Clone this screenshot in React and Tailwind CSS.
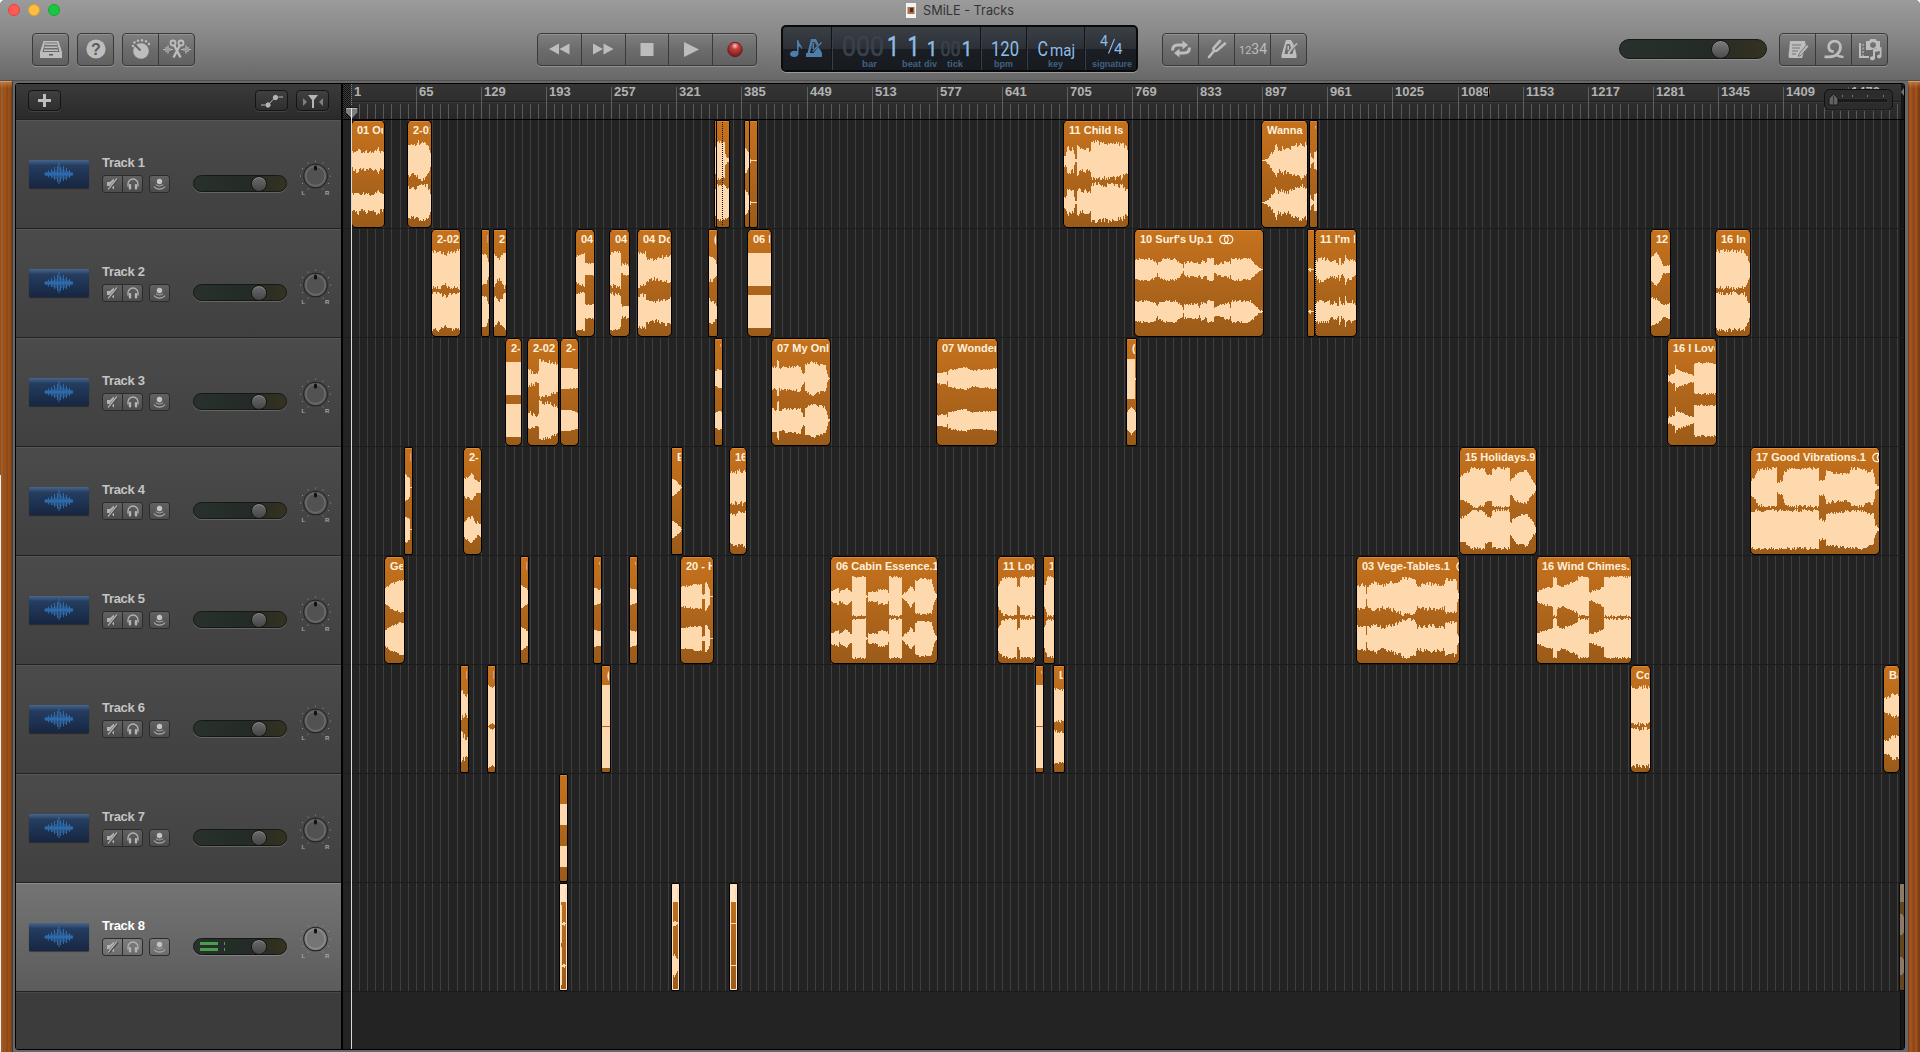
import React from "react";

const SANS = "font-['Liberation_Sans',Arial,sans-serif]";

/* ---------- region data: [start, end, label, envelope, jitter, options] ---------- */
const LANES = [
  [
    [351, 385, "01 Our Prayer", "0 10 5 13 9 10 14 12 18 10 23 12 26 14 28 10 32 11", 4],
    [407, 432, "2-01", "0 17 8 17 10 20.5 18 20.5 21 15 23 8", 5],
    [714, 718, "", "0 14 2 14", 1],
    [716, 730, "  In", "0 20 7 19 8 7 10 3 12 3", 3, { ch2: "0 19 7 19 9 17 12 14", dots: 6 }],
    [744, 750, "", "0 14 2 11 4 7", 2],
    [749, 758, " -", "0 2 1 0.5 8 0.5", 0],
    [1063, 1129, "11 Child Is", "0 8 2 9 3 15 9 13 11 2 12 2 13 16 18 12 20 15 26 12 27 20.5 40 20.5 50 20.5 58 19 64 13", 5],
    [1261, 1308, "Wanna", "0 0.5 4 2 8 8 12 14 14 18 16 13 20 15 25 13 30 16 38 20 45 18", 5],
    [1309, 1318, "'", "0 8 1 4 3 2 4 9 7 10", 1],
  ],
  [
    [431, 461, "2-02", "0 20.5 8 20 13 17 18 20 27 20.5", 4],
    [481, 490, "I", "0 16 4 15 6 8 7 5", 1],
    [493, 507, "2-", "0 18 4 12 8 15 10 20 12 17", 4],
    [575, 595, "04", "0 14 8.9 18 9 7 18 7", 2, { ch2: "0 19.5 8.9 19.5 9 8 18 8" }],
    [609, 630, "04", "0 18 10.9 20 11 7 20 7", 4, { ch2: "0 19.5 10.9 19.5 11 8 20 8" }],
    [637, 672, "04 Do You", "0 18.5 7.9 18.5 8 13 18 11 22 14 34 15", 4],
    [708, 718, "(", "0 14 4 13 7 9", 4],
    [747, 772, "06 I", "0 17 23 17", 1],
    [1134, 1264, "10 Surf's Up.1", "0 11 5 12 14 12 20 10 22 6 22.9 4 23 9 30 12 40 12 45 8 47 6 48 2 49 8 62 9 64 6 66 10 71 8 72 12 78 12 79 6 88 8 94 10 95 6 96 12 114 12 118 9 124 2 128 0.5", 2.5, { stereo: true }],
    [1307, 1315, "", "0 0.5 2 2 3 0.5 5 0.5", 0],
    [1314, 1357, "11 I'm In", "0 10 5 14 10 12 14 12 16 8 20 11 23 8 24 15 26 8 29 9 30 16 33 10 36 12 40 9", 4, { dots: 1 }],
    [1650, 1671, "12", "0 13 5 18 8 13 12 5 19 5", 2, { ch2: "0 15 6 13 12 7 19 9" }],
    [1715, 1751, "16 In", "0 20.5 28 20.5 31 14 34 6", 4],
  ],
  [
    [505, 522, "2-", "0 17 15 17", 1],
    [527, 559, "2-02", "0 10 9 6 9.5 10 10.900 6 11 20.5 20 19 30 15", 4],
    [560, 579, "2-", "0 11 17 10", 0.5, { ch2: "0 11 8 11 17 8" }],
    [714, 723, "'", "0 8 3 10 7 9", 1],
    [771, 831, "07 My Only", "0 13 4 12 5 20 6 20 7 12 28 14 30 8 31 6 32 6 33 15 40 18 53 14 56 2 58 0.5", 3],
    [936, 998, "07 Wonderful", "0 6 9 7 10 4 11 9 28 12 35 9 37 9 60 11", 1.5],
    [1126, 1137, "(", "0 20 7.9 20 8 1 9 1", 0, { ch2: "0 9 4 14 8 9 9 1" }],
    [1667, 1717, "16 I Love To", "0 4 6 6 7 14 8 10 14 8 25.9 4 26 16.5 48 16.5", 2],
  ],
  [
    [404, 413, "I", "0 14 4 11 4.9 8 5 0.5 7 0.5", 2],
    [463, 482, "2-", "0 10 8 15 11 9 17 7", 3],
    [671, 683, "E", "0 9 4 7 9 1", 1],
    [729, 747, "16", "0 18 15 19", 5],
    [1459, 1537, "15 Holidays.9", "0 13 8 17 11 20.5 24.9 20.5 25 16 31 14 32 20 34 20.5 49.9 20.5 50 8 56 15 66 18 70 12 76 3", 3],
    [1750, 1880, "17 Good Vibrations.1", "0 9 4 14 7 19 12 20 14 20.5 25 20.5 25.9 7 31 8 33 17 38 20.5 67.9 20.5 68 9 73 9 75 18 80 16 98 15 100 20.5 110 20.5 118 16 121 19 123 12 124 5 128 0.5", 3, { ch2: "0 20.5 67.9 20.5 68 12 74 10 75 18 100 20 110 20.5 122 17 124 6 128 0.5", stereo: true }],
  ],
  [
    [384, 405, "Gee", "0 9 5 13 10 15 14 16.5 19 17", 2],
    [520, 529, "I", "0 12 3 10 7 7", 1],
    [593, 602, "'", "0 9 7 7", 1],
    [629, 638, "'", "0 9 7 7", 1],
    [680, 714, "20 - Hidden", "0 11 14 13 20 13 20.9 12 21 3 23 3 23.5 15 25 15 28 9 28.5 1 32 0.5", 2],
    [830, 938, "06 Cabin Essence.1", "0 6 7 9 8 5 10 7 15 10 20 5 20.9 5 21 20.5 34.9 20.5 35 2 36 1 37 6 46 6 47 9 56 8 57 5 58 20.5 70.9 20.5 71 2 73 5 77 8 79 12 83 7 84 17 90 19 100 18 103 6 106 0.5", 2],
    [997, 1036, "11 Look", "0 13 4 19 9 20.5 18.9 20.5 19 10 21 12 22 20.5 37 20.5", 2.5],
    [1043, 1055, "1", "0 12 3 20.5 10 20.5", 3],
    [1356, 1460, "03 Vege-Tables.1", "0 14 8 13 9 5 10 13 18 16 25 13 40 17 46 20.5 57 20.5 60 13 75 15 87 13 88 19 99 18 100 8 102 0.5", 4, { stereo: true }],
    [1536, 1632, "16 Wind Chimes.1", "0 6 6 9 15.9 11 16 20 19 20.5 20 13 25 11 40 17 41 20.5 51.9 20.5 52 5 60 8 66.9 11 67 20.5 94 20.5", 2],
  ],
  [
    [460, 469, "I", "0 17 3 14 5 12 7 14", 7],
    [487, 496, "I", "0 20.5 4 18 7 20.5", 0.5],
    [601, 611, "(", "0 20.5 9 20.5", 0.5],
    [1035, 1044, "'", "0 20.5 9 20.5", 0],
    [1053, 1065, "L", "0 18 10 17", 3],
    [1630, 1651, "Cor", "0 20.5 20 20.5", 4],
    [1883, 1900, "Bar", "0 9 6 10 8 14 15 11", 3],
  ],
  [[559, 568, ":", "0 10.5 8 10.5", 0.3]],
  [
    [559, 568, "|", "0 19 1 19 2 1 4 2 5 0.5 7 0.5", 0, { selected: true }],
    [671, 680, "|", "0 2 3 3 4 2 7 1", 1, { selected: true, ch2: "0 8 2 12 4 8 7 3" }],
    [729, 738, "|", "0 2 1 0.5 7 0.5", 0, { selected: true }],
  ],
];

const noise = (n) => {
  const s = Math.sin(n * 127.1 + 11.7) * 43758.5453;
  return s - Math.floor(s);
};

function envelopeAt(points, x) {
  for (let i = 0; i + 3 < points.length; i += 2) {
    const [x0, a0, x1, a1] = points.slice(i, i + 4);
    if (x >= x0 && x < x1) return a0 + ((a1 - a0) * (x - x0)) / (x1 - x0);
  }
  return points[points.length - 1];
}

function wavePath(env, jitter, width, seed, center) {
  const pts = env.split(" ").map(Number);
  let d = "";
  for (let x = 0; x < width; x++) {
    const amp = envelopeAt(pts, x);
    const j = Math.min(jitter, amp * 0.5);
    const up = Math.max(0.5, amp - j * noise(seed + x * 2.3));
    const down = Math.max(0.5, amp - j * noise(seed + x * 3.7 + 9));
    const top = Math.round(center - up);
    const bottom = Math.round(center + down);
    d += `M${x} ${top}h1v${bottom - top}h-1z`;
  }
  return d;
}

function Region({ data }) {
  const [start, end, label, env, jitter, opt = {}] = data;
  const inner = end - start - 2;
  const narrow = inner < 13;
  return (
    <div
      className={`absolute top-0 h-[108px] overflow-hidden border border-black bg-gradient-to-b from-[#c6721d] to-[#9b5b19] ${narrow ? "rounded-[2px]" : "rounded-[5px]"}`}
      style={{ left: start - 343, width: end - start }}
    >
      <svg className="absolute left-0 top-0" width={inner} height="106" shapeRendering="crispEdges">
        <rect width={inner} height="1" fill="#de8a35" />
        <path fill="#ffd9ae" d={wavePath(env, jitter, inner, start, 39.5)} />
        <path fill="#ffd9ae" d={wavePath(opt.ch2 || env, jitter, inner, start + 0.7, 81.5)} />
        {opt.dots && <path d={`M${opt.dots - 0.5} 1V105`} stroke="#111" strokeDasharray="1 1" />}
        {opt.selected && <path fill="#ffe3c2" fillRule="evenodd" d={`M0 0H${inner}V106H0zM1 18V105H${inner - 1}V18z`} />}
      </svg>
      <div className={`relative flex h-[18px] items-center gap-[7px] overflow-hidden whitespace-pre pl-[5px] pt-px text-[11px] font-bold leading-none ${inner > 100 ? "" : "mr-px"} ${opt.selected ? "text-[#bfa98d]" : "text-[#fff1df]"}`}>
        <span>{label}</span>
        {opt.stereo && (
          <svg className="-ml-px shrink-0" width="15" height="11" fill="none" stroke="#fff1df" strokeWidth="1.2">
            <circle cx="5" cy="5.5" r="4.2" />
            <circle cx="9.6" cy="5.5" r="4.2" />
          </svg>
        )}
      </div>
    </div>
  );
}

/* ---------- toolbar ---------- */
function ButtonGroup({ children, className = "" }) {
  return (
    <div className={`flex h-[33px] divide-x divide-[#3a3a3a] overflow-hidden rounded-[4px] border border-[#3a3a3a] bg-gradient-to-b from-[#7f7f7f] via-[#6c6c6c] via-50% to-[#616161] shadow-[0_1px_0_rgba(255,255,255,0.22)] ${className}`}>
      {children}
    </div>
  );
}
function Btn({ children }) {
  return (
    <button className="flex h-full flex-1 items-center justify-center shadow-[inset_0_1px_0_rgba(255,255,255,0.15)]">
      <svg width="32" height="30" viewBox="0 0 32 30" fill="#bdbdbd" stroke="none">{children}</svg>
    </button>
  );
}

const Metronome = () => (
  <g>
    <path fillRule="evenodd" d="M13 6h5l3 5-1.5 2.5L16.500 20h3l1-4 1.500-2 1.500 7v3H8.500v-3L12 9zM13.500 10l-2 10h3l3.500-6-1-4zM14.500 12h1.500v4h-1.500z" />
    <path d="M15 19L24 9.500" stroke="#bdbdbd" strokeWidth="1.500" />
  </g>
);

function VolumeSlider({ className, knob, knobClass, meter }) {
  return (
    <div className={`relative flex items-center rounded-full border border-[#161816] bg-gradient-to-r from-[#28312c] via-[#242b27] via-60% to-[#35321f] shadow-[0_1px_0_rgba(255,255,255,0.18)] ${className}`}>
      {meter && (
        <div className="ml-[6px] flex gap-[6px]">
          <div className="flex flex-col gap-[3px]">
            <div className="h-[3px] w-[18px] bg-[#48a04a]" />
            <div className="h-[3px] w-[18px] bg-[#48a04a]" />
          </div>
          <div className="flex flex-col gap-[3px]">
            <div className="h-[3px] w-px bg-[#48a04a]" />
            <div className="h-[3px] w-px bg-[#48a04a]" />
          </div>
        </div>
      )}
      <div className={`absolute rounded-full border border-[#151515] bg-gradient-to-b shadow-[inset_0_1px_0_#8a8a8a] ${knobClass}`} style={{ left: knob }} />
    </div>
  );
}

function Lcd() {
  const t = (x, y, size, w, s, fill = "#8dbde6") => (
    <text x={x} y={y} fontSize={size} textLength={w} lengthAdjust="spacingAndGlyphs" fill={fill}>{s}</text>
  );
  return (
    <div className="h-[47px] w-[357px] rounded-[5px] border-2 border-[#0a0a0c] bg-gradient-to-b from-[#3b3f46] to-[#1e2128] shadow-[0_1px_0_rgba(255,255,255,0.3)]">
      <svg width="353" height="43" viewBox="783 27 353 43" fontFamily="Roboto, sans-serif">
        <rect x="783" y="49" width="353" height="21" fill="#16181e" opacity=".75" />
        {[831, 980, 1026, 1084].map((x) => (
          <g key={x}><rect x={x} y="27" width="1" height="43" fill="#121419" /><rect x={x + 1} y="27" width="1" height="43" fill="#3a3e45" /></g>
        ))}
        <g fill="#4e7ea9">
          <path d="M797 40h1.500c0 4 4 4.500 3.500 9.500-.8-2-2-2.700-3.500-3v7c0 2-1.800 3.500-4.200 3.500-2.500 0-4.300-1.300-4.300-3s2-3.300 4.500-3.300c1 0 1.800.2 2.500.6z" />
          <path fillRule="evenodd" d="M811 39h5l2.500 5-1.500 2-2.500-4h-2L810 53h3.500l4.500-6 2.500 3 1.500 3v4h-16v-4h1.500zM812.500 43h1.500v6h-1.500z" />
          <path d="M812.500 51.500l9-9" stroke="#4e7ea9" strokeWidth="1.500" />
        </g>
        <g stroke="#39414b" strokeWidth=".7">
          {t(842, 55.500, 28, 42, "000", "#39414b")}
          {t(940.500, 55.500, 20, 20, "00", "#39414b")}
        </g>
        <g stroke="#8dbde6" strokeWidth=".5">
          {t(887, 55.500, 28, 12, "1")}
          {t(907.500, 55.500, 28, 12, "1")}
          {t(927, 55.500, 20, 10, "1")}
          {t(962, 55.500, 20, 10, "1")}
        </g>
        {t(991, 55.500, 20, 28, "120")}
        {t(1037.500, 55.500, 20, 10.500, "C")}
        {t(1050, 55.500, 16, 25, "maj")}
        {t(1100, 46, 15, 8, "4")}
        <path d="M1108.500 53.500L1114.500 39" stroke="#8dbde6" strokeWidth="1.100" />
        {t(1114, 54, 15, 8.500, "4")}
        <g fontFamily="Liberation Sans, sans-serif" fontSize="9" fontWeight="bold">
          {[[862, 15, "bar"], [902, 19, "beat"], [924, 13, "div"], [947, 16, "tick"], [994, 19, "bpm"], [1048, 15, "key"], [1092, 40, "signature"]].map(([x, w, s]) => (
            <text key={s} x={x} y="66.500" textLength={w} lengthAdjust="spacingAndGlyphs" fill="#3f6283">{s}</text>
          ))}
        </g>
      </svg>
    </div>
  );
}

function Toolbar() {
  return (
    <header className="h-[81px] shrink-0 border-b border-[#505050] bg-gradient-to-b from-[#9b9b9b] via-[#858585] via-50% to-[#686868]">
      <div className="flex h-[20px] items-center">
        <div className="flex w-[906px] gap-2 pl-2">
          <div className="size-[12px] rounded-full border border-[#e0443e] bg-[#ff5a56]" />
          <div className="size-[12px] rounded-full border border-[#dfa023] bg-[#ffbe3f]" />
          <div className="size-[12px] rounded-full border border-[#12ac28] bg-[#1bc645]" />
        </div>
        <svg width="10" height="15" className="mr-[7px]"><rect width="10" height="15" fill="#f4f4f4" /><rect x="1.500" y="4" width="7" height="7" fill="#a96f45" /><rect x="4" y="5" width="3" height="4" fill="#4c2f20" /></svg>
        <svg width="96" height="16"><text x="0" y="13" fontFamily="Inter, sans-serif" fontSize="13" textLength="91" lengthAdjust="spacingAndGlyphs" fill="#333">SMiLE - Tracks</text></svg>
      </div>
      <div className="mt-[5px] flex h-[47px] items-center pl-8 pt-px">
        <ButtonGroup className="w-[37px]">
          <Btn>
            <path fillRule="evenodd" d="M8.500 7h15l3.500 11v6H5v-6zM10 8.500l-2.500 9.500h17L22 8.500z" />
            <path d="M10 9.500h12v1.500H10zM9.500 12.500h13V14h-13zM9 15.500h14V17H9z" />
            <rect x="14" y="20" width="4" height="1.500" fill="#5a5a5a" />
          </Btn>
        </ButtonGroup>
        <ButtonGroup className="ml-2 w-[37px]">
          <Btn>
            <circle cx="16" cy="15" r="9.600" />
            <text x="16" y="20.500" textAnchor="middle" fontFamily="Liberation Sans, sans-serif" fontWeight="bold" fontSize="16" fill="#5c5c5c">?</text>
          </Btn>
        </ButtonGroup>
        <ButtonGroup className="ml-2 w-[73px]">
          <Btn>
            <circle cx="16" cy="17" r="7.800" />
            <path d="M10 11l5.500 5.500" stroke="#666" strokeWidth="1.800" />
            {[[8, 12], [9.500, 8.500], [13, 6.800], [17, 6.200], [21, 7.200], [24, 10]].map(([x, y]) => <circle key={x} cx={x} cy={y} r="1.200" />)}
          </Btn>
          <Btn>
            <g fill="none" stroke="#bdbdbd">
              <circle cx="12" cy="9" r="2.500" strokeWidth="1.800" />
              <circle cx="20" cy="9" r="2.500" strokeWidth="1.800" />
              <path d="M13 11l6.500 12.500M19 11l-6.500 12.500" strokeWidth="2.400" />
              <path d="M2 15.500h2M5 13v5M7 11.500v8M9 14v3M10 15.500h2M20 15.500h2M23 14v3M25 11.500v8M27 13v5M28 15.500h2" strokeWidth="1.200" />
            </g>
          </Btn>
        </ButtonGroup>

        <ButtonGroup className="ml-[342px] w-[220px]">
          <Btn><path d="M16 9.500v11l-10-5.500zM26.500 9.500v11l-10-5.500z" /></Btn>
          <Btn><path d="M6 9.500v11l10-5.500zM16.500 9.500v11l10-5.500z" /></Btn>
          <Btn><rect x="9.500" y="9" width="13" height="13" /></Btn>
          <Btn><path d="M9 8v15l15-7.500z" /></Btn>
          <Btn>
            <defs><radialGradient id="rec" cx=".5" cy=".25" r=".8"><stop offset="0" stopColor="#ffc9c4" /><stop offset=".3" stopColor="#c4423e" /><stop offset="1" stopColor="#6d1413" /></radialGradient></defs>
            <circle cx="16" cy="15.500" r="7.200" fill="url(#rec)" stroke="#5a1a1a" strokeWidth=".8" />
          </Btn>
        </ButtonGroup>

        <div className="-mt-px ml-6"><Lcd /></div>

        <ButtonGroup className="ml-6 w-[145px]">
          <Btn>
            <path fill="none" stroke="#bdbdbd" strokeWidth="3" d="M7.500 16.500c0-4 2.500-5.500 5.500-5.500h5M24.500 13.500c0 4-2.500 5.500-5.500 5.500h-5" />
            <path d="M17.500 6.500l5.500 4.500-5.500 4.500zM14.500 14.500L9 19l5.500 4.500z" />
          </Btn>
          <Btn><path fill="none" stroke="#bdbdbd" strokeWidth="2.600" strokeLinecap="round" d="M8 23l5-6M19 7l-6 6.500c-1.500 2 .8 4.500 3 3L24 9.500" /></Btn>
          <Btn><text x="2" y="20" textLength="28" lengthAdjust="spacingAndGlyphs" fontFamily="Roboto, sans-serif"><tspan fontSize="11">12</tspan><tspan fontSize="14">34</tspan></text></Btn>
          <Btn><Metronome /></Btn>
        </ButtonGroup>

        <VolumeSlider className="ml-[312px] h-[20px] w-[148px]" knob={91} knobClass="size-[19px] from-[#7c7c7c] to-[#4b4b4b]" />

        <ButtonGroup className="ml-3 w-[109px]">
          <Btn>
            <path d="M8 7h15l1 5-4 12H8c-1 0-1.500-1-1.500-2z" />
            <path d="M10 11h9M10 14h8M10 17h6M10 20h4" stroke="#777" strokeWidth="1.200" />
            <path d="M17 20l8-9.500 2 1.800-8 9.200-2.600.8z" stroke="#666" strokeWidth=".8" />
          </Btn>
          <Btn>
            <path fill="none" stroke="#bdbdbd" strokeWidth="2.800" d="M6.500 22.800h5c7 0 11-4.800 11-9.800 0-3.500-2.700-5.800-6-5.800s-5.800 2.500-5.800 5.500c0 2.800 1.800 4.800 5 4.800" />
            <path fill="none" stroke="#bdbdbd" strokeWidth="2.400" d="M18 20c1.500 2 4 3 7.500 2.800" />
          </Btn>
          <Btn>
            <path fillRule="evenodd" d="M12 7h3l1.500-2h5L23 7h3v7h-4l-5 2h-5zM19 8a3 3 0 1 0 .01 0z" />
            <path d="M5 9h2v13h8v2H5z" /><path d="M9 10v12" stroke="#bdbdbd" strokeWidth="1.200" strokeDasharray="2 1.500" />
            <path d="M19 15l8.500-2v9c0 3-4.500 3-4.500.5 0-1.500 1.500-2 2.800-2V17L21 18v6c0 3-5 3-5 .5 0-1.800 1.500-2.300 3-2.300z" />
          </Btn>
        </ButtonGroup>
      </div>
    </header>
  );
}

/* ---------- track headers ---------- */
const SmallBtn = "flex h-[18px] items-center justify-center border border-[#2b2b2b] bg-gradient-to-b from-white/15 to-white/5";

function TrackHeader({ n, selected }) {
  return (
    <div className={`flex h-[109px] shrink-0 border-t border-[#222] bg-gradient-to-b ${selected ? "from-[#747474] to-[#5c5c5c] shadow-[inset_0_1px_0_#8b8b8b]" : "from-[#4b4b4b] to-[#404040] shadow-[inset_0_1px_0_#565656]"}`}>
      <div className="ml-[13px] mt-[40px] flex h-[28px] w-[60px] items-center justify-center rounded-[1px] bg-gradient-to-b from-[#47658b] via-[#243d60] via-20% to-[#172641] shadow-[0_1px_1px_rgba(0,0,0,0.4)]">
        <svg width="30" height="22" viewBox="0 0 30 22" stroke="#3578bd" strokeWidth=".8">
          <path d="M1 10v2M2.500 9v4M4.500 7.500v7M6 9v4M7.500 6v9M9 8v7M10.500 4v13M12 7v9M13.500 3v16M15 0v21M16.500 4v15M18 6v10M19.500 3v15M21 7v9M22.500 5v12M24 8v6M25.500 7v8M27 9v4M28.500 10v2" />
          <path d="M1 11h28" strokeWidth="3" stroke="#2c69ad" />
        </svg>
      </div>
      <div className="ml-[13px] mt-[35px] w-[71px]">
        <div className={`text-[13px] font-bold leading-[15px] tracking-[-0.3px] ${selected ? "text-white" : "text-[#c4c4c4]"}`}>Track {n}</div>
        <div className="mt-[5px] flex">
          <button className={`${SmallBtn} w-[21px] rounded-l-[3px]`}>
            <svg width="15" height="14" fill="#b4b4b4" stroke="#b4b4b4"><path stroke="none" d="M2 5h3l4-3.500v11L5 9H2z" /><path d="M3.500 12.500L12.500 2" stroke="#4a4a4a" strokeWidth="3" /><path d="M3 12.500L12 1.500" strokeWidth="1.200" /></svg>
          </button>
          <button className={`${SmallBtn} -ml-px w-[21px] rounded-r-[3px]`}>
            <svg width="14" height="14" fill="#b4b4b4"><path fill="none" stroke="#b4b4b4" strokeWidth="1.300" d="M2 9.500V7a5 5 0 0 1 10 0v2.500" /><rect x="2.800" y="7" width="2.400" height="5.500" rx="1" /><rect x="8.800" y="7" width="2.400" height="5.500" rx="1" /></svg>
          </button>
          <button className={`${SmallBtn} ml-[6px] w-[21px] rounded-[3px]`}>
            <svg width="15" height="14" fill="none" stroke="#a8a8a8"><circle cx="7.500" cy="4.500" r="2.700" fill="#c4c4c4" stroke="none" /><path d="M4 7.500c1.500 2 5.500 2 7 0M2 9.500c2.500 3.500 8.500 3.500 11 0" strokeWidth="1.100" /></svg>
          </button>
        </div>
      </div>
      <VolumeSlider className="ml-[20px] mt-[55px] h-[17px] w-[94px]" knob={56.5} knobClass="size-[16px] from-[#6b6b6b] to-[#454545]" meter={selected} />
      <svg className="ml-[12px] mt-[38px]" width="34" height="40" viewBox="299 157 34 40">
        {[...Array(11)].map((_, i) => {
          const a = ((-150 + i * 30) * Math.PI) / 180;
          return <circle key={i} cx={315.5 + 15 * Math.sin(a)} cy={175 - 15 * Math.cos(a)} r=".6" fill="#999" />;
        })}
        <circle cx="315.500" cy="175" r="12.300" fill="#222" />
        <circle cx="315.500" cy="175" r="11.200" fill={selected ? "#7d7d7d" : "#5d5d5d"} />
        <circle cx="315.500" cy="175" r="9.500" fill={selected ? "#757575" : "#525252"} stroke={selected ? "#999" : "#767676"} strokeWidth=".8" />
        <rect x="314" y="164.500" width="3" height="5" rx="1.500" fill="#111" />
        <g fontFamily="Liberation Sans, sans-serif" fontSize="6" fontWeight="bold" fill="#a5a5a5"><text x="301.500" y="194">L</text><text x="325" y="194">R</text></g>
      </svg>
    </div>
  );
}

const HeadBtn = "flex h-[21px] w-[33px] items-center justify-center rounded-[4px] border border-[#151515] bg-gradient-to-b from-[#404040] to-[#2e2e2e] shadow-[0_1px_0_rgba(255,255,255,0.1)]";

function TrackPanel() {
  return (
    <aside className="flex w-[325px] shrink-0 flex-col bg-[#3c3c3c]">
      <div className="flex h-[35px] shrink-0 items-start bg-gradient-to-b from-[#3b3b3b] to-[#2a2a2a] pl-3 pt-[6px]">
        <button className={HeadBtn}><svg width="13" height="13" fill="#bdbdbd"><path d="M5 0h3v5h5v3H8v5H5V8H0V5h5z" /></svg></button>
        <button className={`${HeadBtn} ml-[194px]`}>
          <svg width="24" height="14" fill="#b5b5b5" stroke="#b5b5b5"><path d="M1 11h4M8 11l7.500-8M18.500 3H23" fill="none" /><circle cx="8" cy="11" r="2.200" /><circle cx="15.500" cy="3.500" r="2.200" /></svg>
        </button>
        <button className={`${HeadBtn} ml-2`}>
          <svg width="22" height="14" fill="#b5b5b5"><path d="M6 1h10l-4 5v8h-2V6z" /><path d="M1 4v8l4-4zM21 4v8l-4-4z" fill="#808080" /></svg>
        </button>
      </div>
      {LANES.map((_, i) => <TrackHeader key={i} n={i + 1} selected={i === 7} />)}
      <div className="flex-1 border-t border-[#222] shadow-[inset_0_1px_0_#484848]" />
    </aside>
  );
}

/* ---------- timeline ---------- */
const PITCH = 8.138;
const gridX = [...Array(191)].map((_, k) => Math.floor(351.3 + k * PITCH)).filter((x) => x > 352 && x < 1901);
const majors = [...Array(24)].map((_, i) => ({ x: Math.floor(351.3 + i * PITCH * 8), n: 1 + 64 * i }));

function Ruler() {
  return (
    <div className="relative h-[35px] shrink-0 overflow-hidden bg-gradient-to-b from-[#343434] to-[#282828]">
      <svg className="block" width="1561" height="35" viewBox="343 84 1561 35" shapeRendering="crispEdges">
        <defs><pattern id="hatch" width="2" height="2" patternUnits="userSpaceOnUse"><rect width="2" height="2" fill="#3c3c3c" /><rect width="1" height="1" fill="#111" /><rect x="1" y="1" width="1" height="1" fill="#111" /></pattern></defs>
        <rect x="343" y="101" width="1561" height="1" fill="#1e1e1e" />
        <rect x="343" y="102" width="1561" height="1" fill="#3a3a3a" />
        {gridX.map((x) => <rect key={x} x={x} y="104" width="1" height="15" fill="#595959" />)}
        {majors.slice(1).map(({ x }) => <rect key={x} x={x} y="87" width="1" height="32" fill="#606060" />)}
        <rect x="343" y="84" width="8" height="35" fill="url(#hatch)" />
        <path d="M351.500 84V106" stroke="#888" strokeDasharray="1 1" />
        <g fontFamily="Liberation Sans, sans-serif" fontSize="13" fontWeight="bold" fill="#b2b2b2" shapeRendering="auto">
          {majors.map(({ x, n }) => <text key={n} x={x + 3} y="96">{n}</text>)}
        </g>
        <rect x="1488" y="88" width="1" height="9" fill="#000" />
        <rect x="1901" y="84" width="3" height="35" fill="#161616" />
        <path d="M1904 88v8l-3-4z" fill="#777" shapeRendering="auto" />
      </svg>
      <svg className="absolute left-[1481px] top-[5px]" width="70" height="22">
        <rect x=".5" y=".5" width="68" height="20.500" rx="5" fill="#2c2c2c" stroke="#111" />
        <path d="M1 21.500h67" stroke="#444" strokeWidth=".5" />
        <path d="M18.500 6v2M28.500 6v2M43.500 6v2M59.500 6v2" stroke="#777" />
        <rect x="13" y="9.500" width="51" height="4" rx="2" fill="#1a1a1a" stroke="#3c3c3c" strokeWidth=".6" />
        <path d="M5 16V9l4.500-4 4.500 4v7z" fill="#626262" stroke="#151515" /><path d="M9.500 7v8" stroke="#333" />
      </svg>
    </div>
  );
}

function Timeline() {
  return (
    <main className="relative flex w-[1561px] shrink-0 flex-col overflow-hidden bg-[#232323]">
      <Ruler />
      <div className="relative h-[930px] shrink-0 border-t border-black">
        <svg className="absolute left-0 top-0" width="1561" height="930" viewBox="343 120 1561 930" shapeRendering="crispEdges">
          {gridX.map((x) => <rect key={x} x={x} y="120" width="1" height="872" fill="#3f3f3f" />)}
          <rect x="1901" y="120" width="3" height="930" fill="#171717" />
          <rect x="1900" y="120" width="1" height="930" fill="#0c0c0c" />
        </svg>
        {LANES.map((regions, i) => (
          <div key={i} className="relative h-[109px] border-b border-[#1b1b1b]">
            {regions.map((r) => <Region key={r[0]} data={r} />)}
          </div>
        ))}
        <svg className="absolute left-[1556px] top-[763px]" width="5" height="108">
          <rect width="5" height="108" fill="#0a0a0a" /><rect x="1" y="1" width="4" height="106" fill="#64461f" />
          <path fill="#8c7a66" d="M1 1h4v18H1zM1 31h2l2 3v15l-2 3H1zM1 74h2l2 3v12l-2 3H1z" />
        </svg>
      </div>
      <svg className="absolute left-0 top-[20px]" width="18" height="946" viewBox="343 104 18 946">
        <rect x="351" y="107" width="1" height="943" fill="#d8d8d8" shapeRendering="crispEdges" />
        <path d="M345.500 107.500h12.500v5l-6.200 6.500-6.300-6.500z" fill="#7e7e7e" stroke="#1a1a1a" />
        <path d="M346.500 108.500h10.500" stroke="#b5b5b5" />
        <path d="M351.500 108v11" stroke="#e8e8e8" />
      </svg>
    </main>
  );
}

const Wood = ({ className }) => (
  <div className={`w-[12px] shrink-0 border-t border-[#d79b63] shadow-[inset_0_6px_4px_-3px_rgba(230,160,95,0.5)] ${className}`} />
);

export default function App() {
  return (
    <div className={`${SANS} flex h-[1052px] w-[1920px] flex-col overflow-hidden rounded-t-[5px] bg-[#686868]`}>
      <Toolbar />
      <div className="relative flex min-h-0 flex-1">
        <Wood className="rounded-bl-[3px] bg-[linear-gradient(90deg,#8a4a1c_0px,#a8622c_2px,#8f4a18_4px,#a25a22_5px,#8a4413_7px,#9c531e_9px,#7c3c10_12px)]" />
        <div className="absolute left-0 top-[394px] h-[577px] w-px bg-[#efefef]" />
        <div className="flex w-[1896px] border-l border-[#3d3d3d] bg-[#686868] pb-[2px] pl-[2px] pt-[2px]">
          <div className="flex w-[1890px] overflow-hidden rounded-[3px] border border-black">
            <TrackPanel />
            <div className="w-[2px] shrink-0 bg-black" />
            <Timeline />
          </div>
        </div>
        <Wood className="bg-[linear-gradient(90deg,#6f3210_0px,#a65a24_2px,#99501d_4px,#8b4316_6px,#a2591f_8px,#8a4114_10px,#7b390f_12px)]" />
      </div>
    </div>
  );
}
